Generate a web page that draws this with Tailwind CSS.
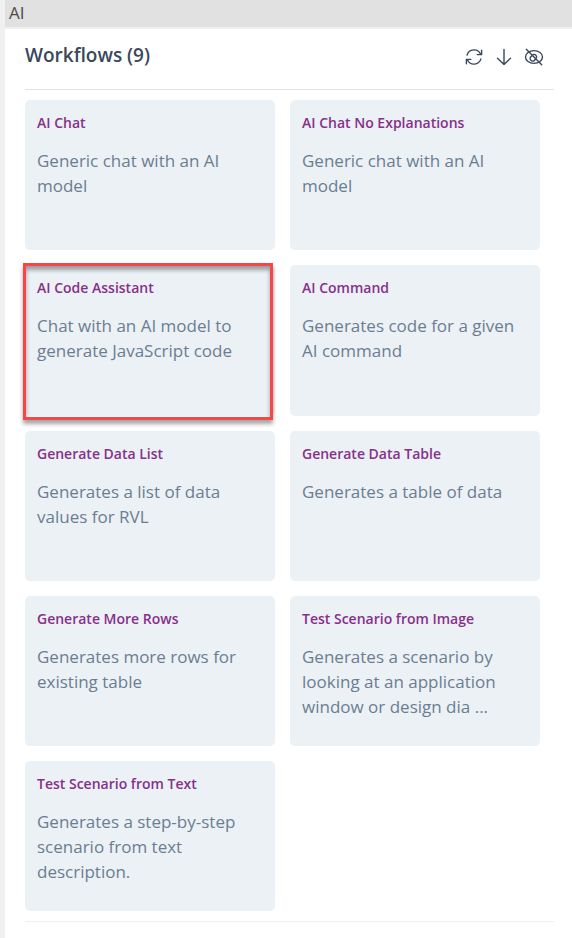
<!DOCTYPE html>
<html lang="en">
<head>
<meta charset="utf-8">
<meta name="viewport" content="width=device-width, initial-scale=1">
<title>AI Workflows</title>
<script src="https://cdn.jsdelivr.net/npm/@tailwindcss/browser@4"></script>
</head>
<body class="min-h-screen flex flex-col bg-[#f0f0f0] pl-[5px] font-['Open_Sans','Noto_Sans',sans-serif]">
<header class="h-[27px] px-1 bg-[#e1e1e1] text-[17px] leading-[26px] text-[#4b4b4b]">AI</header>
<main class="mt-[2px] grow bg-white pl-5 pr-[18px]">
  <div class="flex items-center justify-between h-[61px] pb-1 pr-[10px] border-b border-[#e2e4e7] text-[#3b475b]">
    <h1 class="pb-1 text-[19px] leading-6 font-semibold">Workflows (9)</h1>
    <div class="flex gap-[10px]">
      <button type="button" aria-label="Refresh" class="size-5">
        <svg class="size-5" viewBox="0 0 20 20" fill="none" stroke="currentColor" stroke-width="1.4" stroke-linecap="round" stroke-linejoin="round"><path d="M3.1 8.1A7.2 7.2 0 0 1 16.6 7.2M17.6 3.2v4.4h-4.4M16.9 11.9A7.2 7.2 0 0 1 3.4 12.8M2.4 16.8v-4.4h4.4"/></svg>
      </button>
      <button type="button" aria-label="Download" class="size-5">
        <svg class="size-5" viewBox="0 0 20 20" fill="none" stroke="currentColor" stroke-width="1.4" stroke-linecap="round" stroke-linejoin="round"><path d="M10 2.5v15M3.5 11.2l6.5 6.3 6.5-6.3"/></svg>
      </button>
      <button type="button" aria-label="Hide" class="size-5">
        <svg class="size-5" viewBox="0 0 20 20" fill="none" stroke="currentColor" stroke-width="1.4" stroke-linecap="round" stroke-linejoin="round"><ellipse cx="10" cy="10" rx="8.5" ry="6.4"/><path d="M7.6 9.2a2.6 2.6 0 1 0 3.6 3.1M9.3 7.5a2.6 2.6 0 0 1 3.2 3.2M2.3 2.3l15.4 15.4"/></svg>
      </button>
    </div>
  </div>
  <div class="grid grid-cols-2 gap-[15px] pt-[10px] pb-[10px] pr-[14px] border-b border-[#eeeff1] text-[17px] leading-[25px] text-[#6c7d92]">
    <a href="#" class="min-h-[150px] rounded-[5px] bg-[#ebf1f5] p-3">
      <h2 class="text-[14px] leading-[22px] font-semibold text-[#87308a]">AI Chat</h2>
      <p class="mt-[14px]">Generic chat with an AI model</p>
    </a>
    <a href="#" class="min-h-[150px] rounded-[5px] bg-[#ebf1f5] p-3">
      <h2 class="text-[14px] leading-[22px] font-semibold text-[#87308a]">AI Chat No Explanations</h2>
      <p class="mt-[14px]">Generic chat with an AI model</p>
    </a>
    <a href="#" class="relative min-h-[151px] rounded-[5px] bg-[#ebf1f5] p-3">
      <h2 class="text-[14px] leading-[22px] font-semibold text-[#87308a]">AI Code Assistant</h2>
      <p class="mt-[14px]">Chat with an AI model to generate JavaScript code</p>
      <span class="absolute -left-[2px] right-[2px] -top-[2px] -bottom-[4px] border-3 border-[#fb4444] shadow-[0_4px_4px_rgba(0,0,0,0.35),inset_0_4px_4px_rgba(0,0,0,0.35)]"></span>
    </a>
    <a href="#" class="min-h-[151px] rounded-[5px] bg-[#ebf1f5] p-3">
      <h2 class="text-[14px] leading-[22px] font-semibold text-[#87308a]">AI Command</h2>
      <p class="mt-[14px]">Generates code for a given AI command</p>
    </a>
    <a href="#" class="min-h-[150px] rounded-[5px] bg-[#ebf1f5] p-3">
      <h2 class="text-[14px] leading-[22px] font-semibold text-[#87308a]">Generate Data List</h2>
      <p class="mt-[14px]">Generates a list of data values for RVL</p>
    </a>
    <a href="#" class="min-h-[150px] rounded-[5px] bg-[#ebf1f5] p-3">
      <h2 class="text-[14px] leading-[22px] font-semibold text-[#87308a]">Generate Data Table</h2>
      <p class="mt-[14px]">Generates a table of data</p>
    </a>
    <a href="#" class="min-h-[150px] rounded-[5px] bg-[#ebf1f5] p-3">
      <h2 class="text-[14px] leading-[22px] font-semibold text-[#87308a]">Generate More Rows</h2>
      <p class="mt-[14px]">Generates more rows for existing table</p>
    </a>
    <a href="#" class="min-h-[150px] rounded-[5px] bg-[#ebf1f5] p-3">
      <h2 class="text-[14px] leading-[22px] font-semibold text-[#87308a]">Test Scenario from Image</h2>
      <p class="mt-[14px]">Generates a scenario by looking at an application window or design dia ...</p>
    </a>
    <a href="#" class="min-h-[150px] rounded-[5px] bg-[#ebf1f5] p-3">
      <h2 class="text-[14px] leading-[22px] font-semibold text-[#87308a]">Test Scenario from Text</h2>
      <p class="mt-[14px]">Generates a step-by-step scenario from text description.</p>
    </a>
  </div>
</main>
</body>
</html>
